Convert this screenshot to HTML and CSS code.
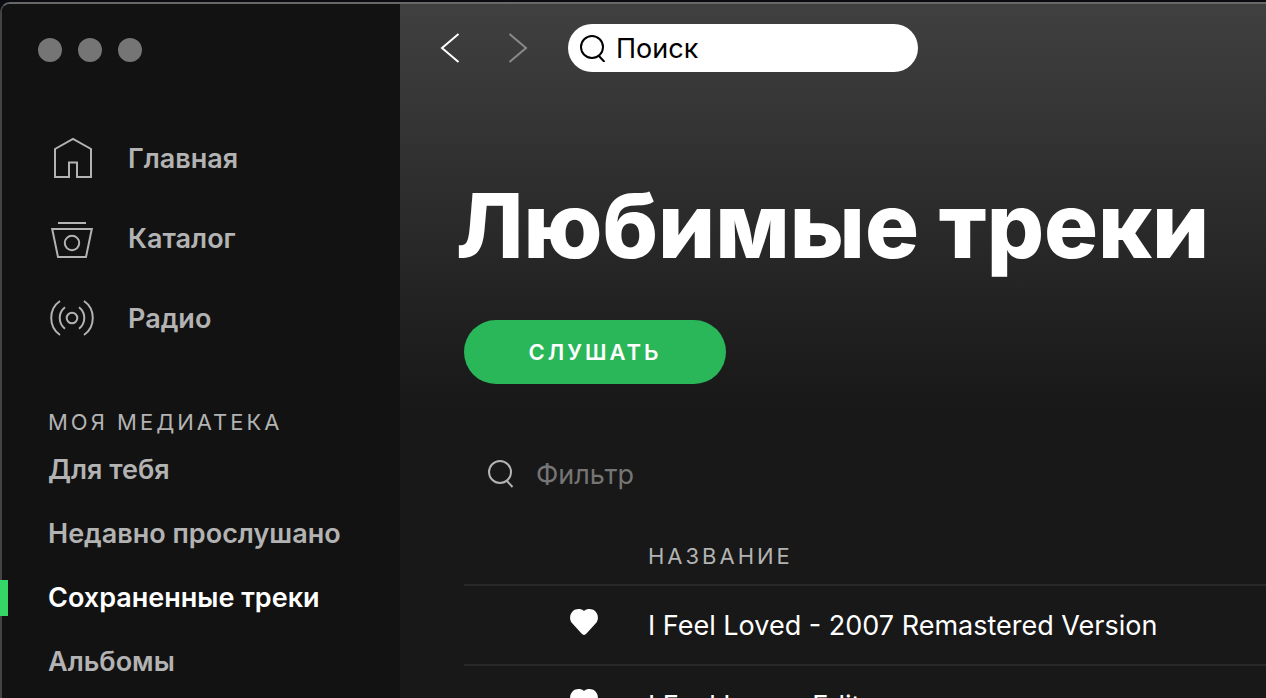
FILE: index.html
```html
<!DOCTYPE html>
<html lang="ru">
  <head>
    <meta charset="UTF-8" />
    <meta name="viewport" content="width=device-width, initial-scale=1.0" />
    <title>Любимые треки</title>
    <link rel="stylesheet" href="styles.css" />
  </head>
  <body>
    <div class="window">
      <aside class="sidebar">
        <div class="dots">
          <span class="dot"></span>
          <span class="dot"></span>
          <span class="dot"></span>
        </div>

        <nav class="nav">
          <a href="#" class="nav-link">
            <svg class="nav-icon" viewBox="0 0 48 48">
              <path d="M7 15L25 5L43 15V43H29V28.500H21V43H7Z" />
            </svg>
            Главная
          </a>
          <a href="#" class="nav-link">
            <svg class="nav-icon" viewBox="0 0 48 48">
              <path d="M10 9H38M4.200 15H43.800L38 43H10Z" />
              <circle cx="24" cy="29" r="7.200" />
            </svg>
            Каталог
          </a>
          <a href="#" class="nav-link">
            <svg class="nav-icon" viewBox="0 0 48 48">
              <circle cx="24" cy="24" r="5.300" />
              <path d="M17 13.300A13.500 13.500 0 0 0 17 34.700M31 13.300A13.500 13.500 0 0 1 31 34.700" />
              <path d="M12 7C.300 15 .300 33 12 41M36 7C47.700 15 47.700 33 36 41" />
            </svg>
            Радио
          </a>
        </nav>

        <h2 class="library-title">Моя медиатека</h2>
        <nav class="library">
          <a href="#" class="library-link">Для тебя</a>
          <a href="#" class="library-link">Недавно прослушано</a>
          <a href="#" class="library-link active">Сохраненные треки</a>
          <a href="#" class="library-link">Альбомы</a>
        </nav>
      </aside>

      <main class="main">
        <header class="topbar">
          <button class="arrow" type="button" aria-label="Назад">
            <svg viewBox="0 0 20 32"><path d="M18.500 2L2 16L18.500 30" /></svg>
          </button>
          <button class="arrow" type="button" aria-label="Вперед" disabled>
            <svg viewBox="0 0 20 32"><path d="M1.500 2L18 16L1.500 30" /></svg>
          </button>
          <label class="search">
            <svg class="search-icon" viewBox="0 0 28 28">
              <circle cx="12" cy="13" r="11" />
              <path d="M18.500 21.500L24.500 28" />
            </svg>
            <input type="text" placeholder="Поиск" aria-label="Поиск" />
          </label>
        </header>

        <h1 class="title">Любимые треки</h1>
        <button class="play" type="button">Слушать</button>

        <label class="filter">
          <svg class="search-icon" viewBox="0 0 28 28">
            <circle cx="12" cy="12" r="11" />
            <path d="M18.500 20.500L24.500 27" />
          </svg>
          <input type="text" placeholder="Фильтр" aria-label="Фильтр" />
        </label>

        <table class="tracks">
          <thead>
            <tr>
              <th class="like"></th>
              <th>Название</th>
            </tr>
          </thead>
          <tbody>
            <tr>
              <td class="like">
                <svg class="heart" viewBox="0 0 28 26">
                  <path d="M14 2C17-.7 22-.6 25 2C28.400 5.200 28.900 10.500 26 14L16.500 24.600Q14 27.200 11.500 24.600L2 14C-.9 10.500-.4 5.200 3 2C6-.6 11-.7 14 2Z" />
                </svg>
              </td>
              <td>I Feel Loved - 2007 Remastered Version</td>
            </tr>
            <tr>
              <td class="like">
                <svg class="heart" viewBox="0 0 28 26">
                  <path d="M14 2C17-.7 22-.6 25 2C28.400 5.200 28.900 10.500 26 14L16.500 24.600Q14 27.200 11.500 24.600L2 14C-.9 10.500-.4 5.200 3 2C6-.6 11-.7 14 2Z" />
                </svg>
              </td>
              <td>I Feel Love - Edit</td>
            </tr>
          </tbody>
        </table>
      </main>
    </div>
  </body>
</html>
```

FILE: styles.css
```css
* {
  box-sizing: border-box;
}
body {
  margin: 0;
  padding-top: 2px;
  height: 100vh;
  overflow: hidden;
  background-color: #0b0c11;
  color: #fff;
  font-family: Inter, "Noto Sans", sans-serif;
  font-size: 27px;
}
button,
input {
  font-family: inherit;
  border: none;
  padding: 0;
}
a {
  color: inherit;
  text-decoration: none;
}
svg {
  display: block;
  fill: none;
  stroke: currentColor;
  stroke-width: 2;
}

.window {
  display: grid;
  grid-template-columns: 398px 1fr;
  height: 100%;
  border-top: 2px solid #686868;
  border-left: 2px solid #444;
  border-top-left-radius: 10px;
}

/* sidebar */
.sidebar {
  padding-top: 34px;
  background-color: #121212;
  border-top-left-radius: 8px;
  color: #b3b3b3;
  font-weight: 600;
}
.dots {
  display: flex;
  gap: 16px;
  padding-left: 36px;
}
.dot {
  width: 24px;
  height: 24px;
  border-radius: 50%;
  background-color: #757575;
}
.nav {
  margin-top: 56px;
}
.nav-link {
  display: flex;
  align-items: center;
  gap: 32px;
  height: 80px;
  padding-left: 46px;
}
.nav-icon {
  width: 48px;
  height: 48px;
}
.library-title {
  margin: 48px 0 0;
  padding-left: 46px;
  font-size: 22px;
  font-weight: 400;
  line-height: 32px;
  letter-spacing: 3px;
  text-transform: uppercase;
}
.library-link {
  position: relative;
  display: block;
  padding-left: 46px;
  line-height: 64px;
}
.library-link.active {
  color: #fff;
}
.library-link.active::before {
  content: "";
  position: absolute;
  left: -2px;
  top: 14px;
  width: 8px;
  height: 36px;
  background-color: #35d768;
}

/* main */
.main {
  min-width: 0;
  padding-left: 64px;
  background: linear-gradient(#404040, #181818 402px);
}
.topbar {
  display: flex;
  align-items: center;
  gap: 48px;
  height: 88px;
  margin-left: -24px;
}
.arrow {
  width: 20px;
  background: none;
  color: #fff;
}
.arrow:disabled {
  color: #8a8a8a;
}
.search {
  display: flex;
  align-items: center;
  gap: 8px;
  width: 350px;
  height: 48px;
  margin-left: -8px;
  padding: 0 12px;
  border-radius: 24px;
  background-color: #fff;
  color: #000;
}
.search-icon {
  flex: none;
  width: 28px;
  height: 28px;
}
.search input,
.filter input {
  min-width: 0;
  flex: 1;
  background: none;
  font-size: 27px;
  outline: none;
}
.search input::placeholder {
  color: #000;
}
.title {
  margin: 76px 0 36px -8px;
  font-size: 90px;
  font-weight: 800;
  line-height: 116px;
  white-space: nowrap;
}
.play {
  display: block;
  width: 262px;
  height: 64px;
  border-radius: 32px;
  background-color: #2ab759;
  color: #fff;
  font-size: 22px;
  font-weight: 600;
  letter-spacing: 3px;
  text-transform: uppercase;
}
.filter {
  display: flex;
  align-items: center;
  gap: 20px;
  height: 48px;
  margin-top: 66px;
  padding-left: 24px;
  color: #b3b3b3;
}
.filter input {
  color: #fff;
}
.filter input::placeholder {
  color: #757575;
}

.tracks {
  width: 100%;
  margin-top: 29px;
  border-collapse: collapse;
  text-align: left;
  white-space: nowrap;
}
.tracks th {
  height: 58px;
  padding: 0;
  border-bottom: 2px solid #282828;
  color: #b3b3b3;
  font-size: 22px;
  font-weight: 400;
  letter-spacing: 3px;
  text-transform: uppercase;
}
.tracks td {
  height: 80px;
  padding: 0;
  border-bottom: 2px solid #282828;
}
.tracks .like {
  width: 184px;
  padding: 0 0 6px 106px;
}
.heart {
  width: 28px;
  height: 26px;
  fill: #fff;
  stroke: none;
}
```
